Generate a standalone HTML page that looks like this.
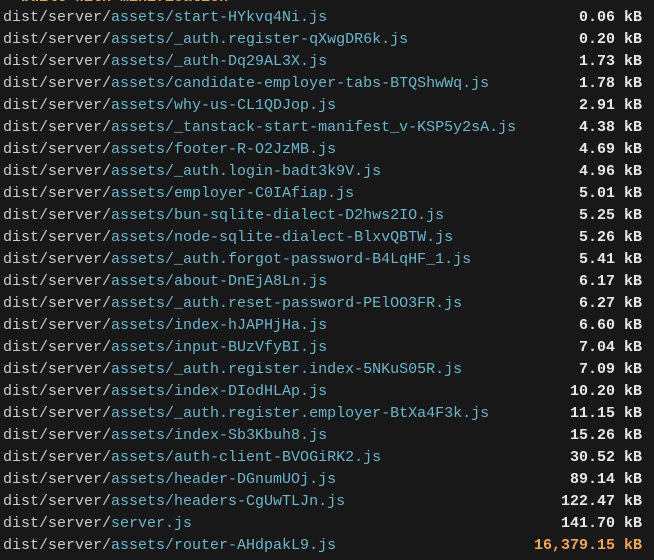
<!DOCTYPE html>
<html><head><style>
body{margin:0;background:#181818;width:654px;height:560px;overflow:hidden;font-family:"Liberation Mono",monospace;font-size:15px;}
.w{position:absolute;top:-15px;left:3px;width:639px;}
.r{height:22px;line-height:22px;white-space:pre;position:relative;color:#cccccc;}
.c{color:#6cb6cc}
.s{position:absolute;right:0;top:0;font-weight:bold;color:#e8e8e8}
.o{color:#f2a65a}
</style></head><body><div class="w">
<div class="r" style="color:#e0a84e;font-weight:bold;top:2px">✓ built with minification</div>
<div class="r">dist/server/<span class="c">assets/start-HYkvq4Ni.js</span><span class="s">0.06 kB</span></div>
<div class="r">dist/server/<span class="c">assets/_auth.register-qXwgDR6k.js</span><span class="s">0.20 kB</span></div>
<div class="r">dist/server/<span class="c">assets/_auth-Dq29AL3X.js</span><span class="s">1.73 kB</span></div>
<div class="r">dist/server/<span class="c">assets/candidate-employer-tabs-BTQShwWq.js</span><span class="s">1.78 kB</span></div>
<div class="r">dist/server/<span class="c">assets/why-us-CL1QDJop.js</span><span class="s">2.91 kB</span></div>
<div class="r">dist/server/<span class="c">assets/_tanstack-start-manifest_v-KSP5y2sA.js</span><span class="s">4.38 kB</span></div>
<div class="r">dist/server/<span class="c">assets/footer-R-O2JzMB.js</span><span class="s">4.69 kB</span></div>
<div class="r">dist/server/<span class="c">assets/_auth.login-badt3k9V.js</span><span class="s">4.96 kB</span></div>
<div class="r">dist/server/<span class="c">assets/employer-C0IAfiap.js</span><span class="s">5.01 kB</span></div>
<div class="r">dist/server/<span class="c">assets/bun-sqlite-dialect-D2hws2IO.js</span><span class="s">5.25 kB</span></div>
<div class="r">dist/server/<span class="c">assets/node-sqlite-dialect-BlxvQBTW.js</span><span class="s">5.26 kB</span></div>
<div class="r">dist/server/<span class="c">assets/_auth.forgot-password-B4LqHF_1.js</span><span class="s">5.41 kB</span></div>
<div class="r">dist/server/<span class="c">assets/about-DnEjA8Ln.js</span><span class="s">6.17 kB</span></div>
<div class="r">dist/server/<span class="c">assets/_auth.reset-password-PElOO3FR.js</span><span class="s">6.27 kB</span></div>
<div class="r">dist/server/<span class="c">assets/index-hJAPHjHa.js</span><span class="s">6.60 kB</span></div>
<div class="r">dist/server/<span class="c">assets/input-BUzVfyBI.js</span><span class="s">7.04 kB</span></div>
<div class="r">dist/server/<span class="c">assets/_auth.register.index-5NKuS05R.js</span><span class="s">7.09 kB</span></div>
<div class="r">dist/server/<span class="c">assets/index-DIodHLAp.js</span><span class="s">10.20 kB</span></div>
<div class="r">dist/server/<span class="c">assets/_auth.register.employer-BtXa4F3k.js</span><span class="s">11.15 kB</span></div>
<div class="r">dist/server/<span class="c">assets/index-Sb3Kbuh8.js</span><span class="s">15.26 kB</span></div>
<div class="r">dist/server/<span class="c">assets/auth-client-BVOGiRK2.js</span><span class="s">30.52 kB</span></div>
<div class="r">dist/server/<span class="c">assets/header-DGnumUOj.js</span><span class="s">89.14 kB</span></div>
<div class="r">dist/server/<span class="c">assets/headers-CgUwTLJn.js</span><span class="s">122.47 kB</span></div>
<div class="r">dist/server/<span class="c">server.js</span><span class="s">141.70 kB</span></div>
<div class="r">dist/server/<span class="c">assets/router-AHdpakL9.js</span><span class="s o">16,379.15 kB</span></div>
</div></body></html>
